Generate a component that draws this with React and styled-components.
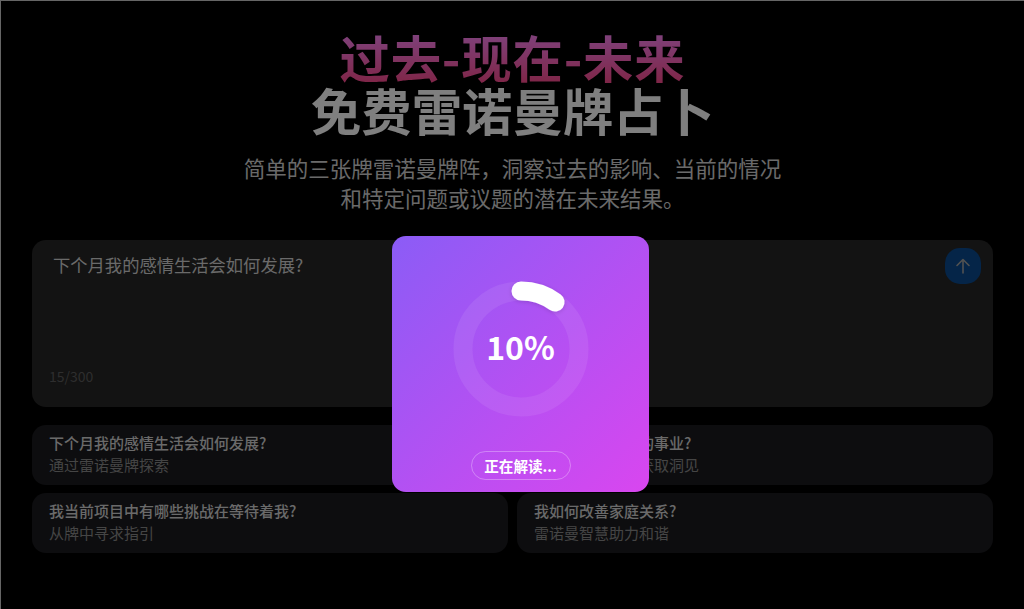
import styled, { createGlobalStyle } from "styled-components";

const GlobalStyle = createGlobalStyle`
  html, body {
    margin: 0;
    padding: 0;
    height: 100%;
    background: #000;
  }
  * {
    box-sizing: border-box;
  }
`;

const FONT = `"Noto Sans CJK SC", "Noto Sans", sans-serif`;

const suggestions = [
  { title: "下个月我的感情生活会如何发展?", sub: "通过雷诺曼牌探索" },
  { title: "我该如何发展我的事业?", sub: "从雷诺曼牌占卜获取洞见" },
  { title: "我当前项目中有哪些挑战在等待着我?", sub: "从牌中寻求指引" },
  { title: "我如何改善家庭关系?", sub: "雷诺曼智慧助力和谐" },
];

const Page = styled.div`
  position: relative;
  width: 1024px;
  height: 609px;
  overflow: hidden;
  padding: 30px 31px 0 32px;
  background: #000;
  font-family: ${FONT};
`;

const Header = styled.header`
  display: flex;
  flex-direction: column;
  align-items: center;
  text-align: center;
`;

const Title = styled.h1`
  margin: 0;
  font-size: 50.4px;
  line-height: 53px;
  font-weight: 700;
  color: #fff;
`;

const TitleAccent = styled.span`
  display: block;
  letter-spacing: 0.8px;
  background: linear-gradient(180deg, #ff88ff, #ff4c90);
  -webkit-background-clip: text;
  background-clip: text;
  color: transparent;
`;

const Subtitle = styled.p`
  margin: 17px 0 0;
  font-size: 21.5px;
  line-height: 30px;
  color: #d4d4d4;
`;

const InputCard = styled.div`
  display: flex;
  justify-content: space-between;
  height: 167px;
  margin-top: 27px;
  padding: 8px 12px 22px 17px;
  background: #262626;
  border-radius: 14px;
`;

const InputBody = styled.div`
  display: flex;
  flex-direction: column;
  justify-content: space-between;
`;

const Question = styled.div`
  padding: 5px 0 0 4px;
  font-size: 17.3px;
  line-height: 24px;
  color: #d4d4d4;
`;

const Count = styled.div`
  font-size: 14px;
  line-height: 18px;
  color: #5c5c5c;
`;

const SendButton = styled.button`
  width: 36px;
  height: 36px;
  padding: 0;
  border: 0;
  border-radius: 15px;
  background: #0a4a90;
  display: flex;
  align-items: center;
  justify-content: center;
  color: #a3a3a3;
`;

const Suggestions = styled.div`
  display: grid;
  grid-template-columns: 476px 476px;
  gap: 8px 9px;
  margin-top: 18px;
`;

const Suggestion = styled.div`
  height: 60px;
  padding: 8px 17px 0;
  background: #1a1a1e;
  border-radius: 14px;
`;

const SuggestionTitle = styled.div`
  font-size: 15px;
  line-height: 20px;
  font-weight: 500;
  color: #d4d4d4;
`;

const SuggestionSub = styled.div`
  margin-top: 2px;
  font-size: 15px;
  line-height: 20px;
  color: #8a8a8a;
`;

/* dims the page and holds the loading card; the padding shifts its centre */
const Overlay = styled.div`
  position: absolute;
  inset: 0;
  display: flex;
  align-items: center;
  justify-content: center;
  padding: 118px 0 0 16px;
  background: rgba(0, 0, 0, 0.5);
  border: 1px solid #666;
  border-right: 0;
  border-bottom: 0;
`;

const Modal = styled.div`
  width: 257px;
  height: 256px;
  padding-top: 45px;
  border-radius: 14px;
  background: linear-gradient(135deg, #8b5cf6, #d946ef);
  display: flex;
  flex-direction: column;
  align-items: center;
  gap: 34px;
  color: #fff;
`;

const Ring = styled.div`
  display: grid;
  place-items: center;
  width: 136px;
  height: 136px;
  > * {
    grid-area: 1 / 1;
  }
`;

const Percent = styled.div`
  padding-bottom: 6px;
  font-size: 32px;
  font-weight: 700;
`;

const Status = styled.div`
  width: 100px;
  height: 29px;
  border: 1px solid rgba(255, 255, 255, 0.3);
  border-radius: 15px;
  display: flex;
  align-items: center;
  justify-content: center;
  font-size: 14.6px;
  font-weight: 700;
`;

export default function App() {
  return (
    <>
      <GlobalStyle />
      <Page>
        <Header>
          <Title>
            <TitleAccent>过去-现在-未来</TitleAccent>
            免费雷诺曼牌占卜
          </Title>
          <Subtitle>
            {"简单的三张牌雷诺曼牌阵\uFF0C洞察过去的影响、当前的情况"}
            <br />
            和特定问题或议题的潜在未来结果。
          </Subtitle>
        </Header>
        <InputCard>
          <InputBody>
            <Question>下个月我的感情生活会如何发展?</Question>
            <Count>15/300</Count>
          </InputBody>
          <SendButton>
            <svg width="20" height="20" viewBox="0 0 20 20" fill="none" stroke="currentColor" strokeWidth="1.6" strokeLinecap="round" strokeLinejoin="round">
              <path d="M10 17V3.5M4 9.5l6-6 6 6" />
            </svg>
          </SendButton>
        </InputCard>
        <Suggestions>
          {suggestions.map((s) => (
            <Suggestion key={s.title}>
              <SuggestionTitle>{s.title}</SuggestionTitle>
              <SuggestionSub>{s.sub}</SuggestionSub>
            </Suggestion>
          ))}
        </Suggestions>
        <Overlay>
          <Modal>
            <Ring>
              <svg width="136" height="136" viewBox="0 0 136 136" fill="none">
                <defs>
                  <filter id="arcShadow" filterUnits="userSpaceOnUse" x="0" y="0" width="136" height="136">
                    <feDropShadow dx="0" dy="1" stdDeviation="2" floodColor="#000" floodOpacity="0.15" />
                  </filter>
                </defs>
                <circle cx="68" cy="68" r="58" stroke="rgba(255,255,255,0.08)" strokeWidth="19" />
                <path
                  d="M68 10A58 58 0 0 1 102.1 21.1"
                  stroke="#fff"
                  strokeWidth="19"
                  strokeLinecap="round"
                  filter="url(#arcShadow)"
                />
              </svg>
              <Percent>10%</Percent>
            </Ring>
            <Status>正在解读...</Status>
          </Modal>
        </Overlay>
      </Page>
    </>
  );
}
